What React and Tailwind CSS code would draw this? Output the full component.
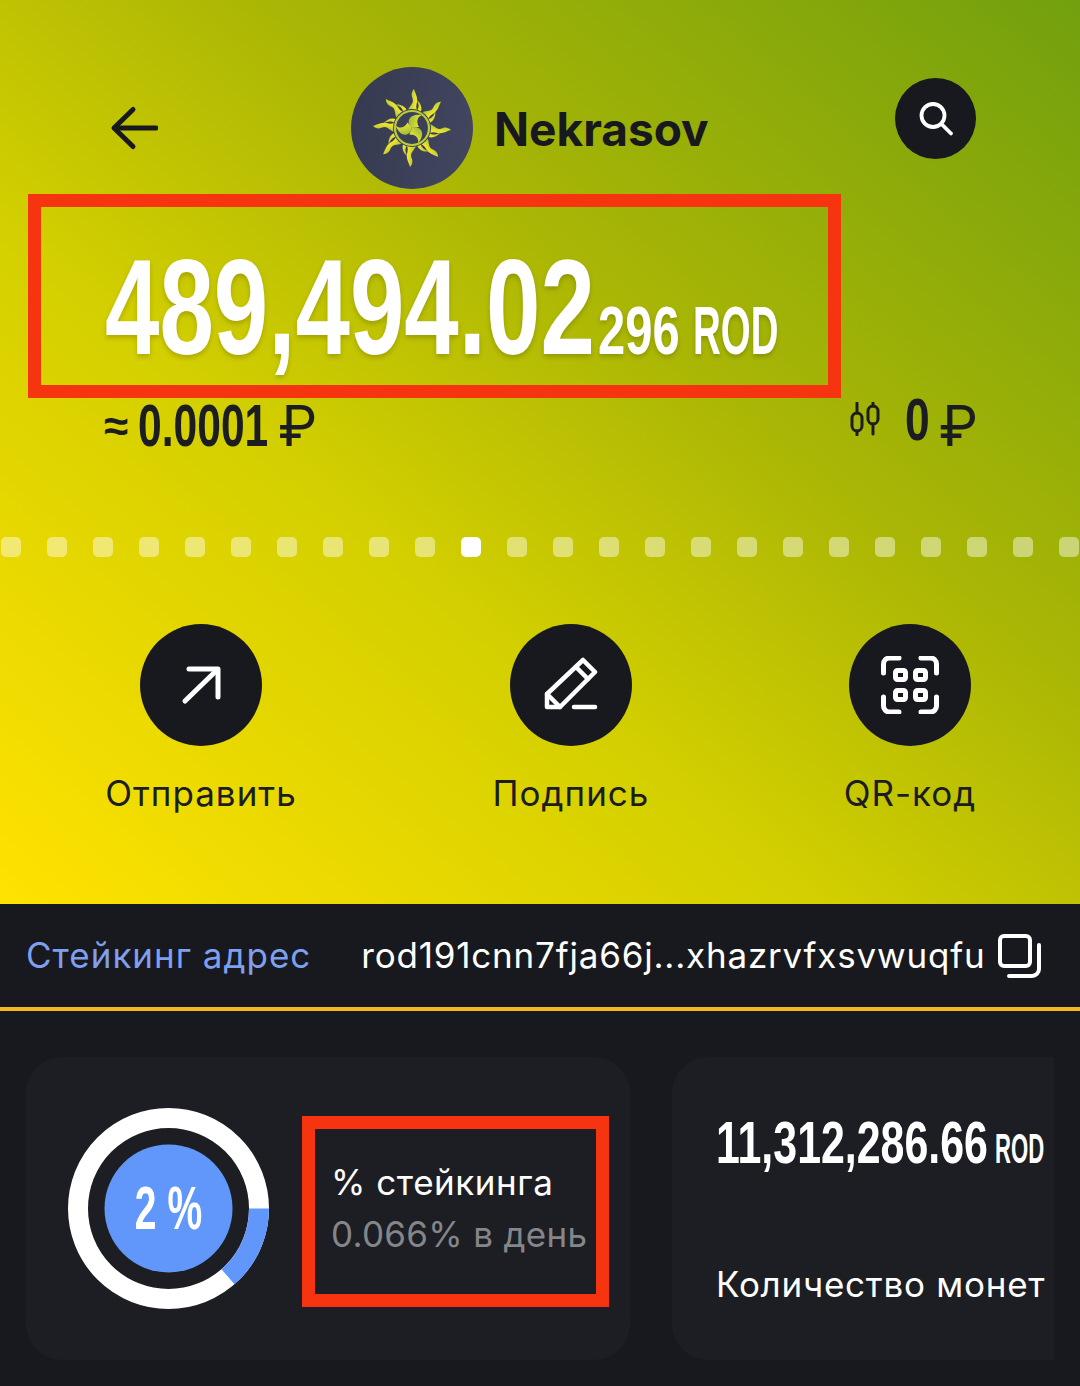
import React from 'react';

const sans = "font-['Inter','Noto_Sans',sans-serif]";
const narrow = "font-['Liberation_Sans',sans-serif]";

function SunLogo() {
  const flames = [];
  for (let i = 0; i < 16; i++) {
    const long = i % 2 === 0;
    flames.push(
      <path
        key={i}
        transform={`rotate(${i * 22.5} 40 40)`}
        d={long
          ? 'M36 22 C38 17 43 15 40 9 C39 6 40 3 42 1 C43 5 46 9 45 14 C44 18 44 20 45 22 Z'
          : 'M38 22 C39 18 37 15 33 12 C38 13 42 17 42 22 Z'}
      />
    );
  }
  return (
    <svg width="80" height="80" viewBox="0 0 80 80">
      <defs>
        <linearGradient id="sun" x1="0" y1="0" x2="1" y2="0.3">
          <stop offset="0" stopColor="#93b53c" />
          <stop offset="0.55" stopColor="#c6d136" />
          <stop offset="1" stopColor="#f5e62a" />
        </linearGradient>
      </defs>
      <g fill="url(#sun)">{flames}</g>
      <circle cx="40" cy="40" r="19" fill="#3b3f58" />
      <circle cx="40" cy="40" r="17" fill="none" stroke="#b9cb38" strokeWidth="2.200" />
      <g fill="url(#sun)">
        <path d="M40 40 C33 33 38 25 50 27 C45 29 44 34 47 39 Z" />
        <path transform="rotate(120 40 40)" d="M40 40 C33 33 38 25 50 27 C45 29 44 34 47 39 Z" />
        <path transform="rotate(240 40 40)" d="M40 40 C33 33 38 25 50 27 C45 29 44 34 47 39 Z" />
      </g>
    </svg>
  );
}

function ActionButton({ label, children, width }) {
  return (
    <div className={`flex flex-col items-center ${width}`}>
      <div className="flex h-[122px] w-[122px] items-center justify-center rounded-full bg-[#17191e]">
        {children}
      </div>
      <span className="mt-[25px] whitespace-nowrap text-[35px] leading-[44px] tracking-[1px] text-[#1b1d21]">{label}</span>
    </div>
  );
}

export default function App() {
  const dots = Array.from({ length: 24 }, (_, i) => i);

  return (
    <div className={`h-[1386px] w-[1080px] overflow-hidden bg-[#17191e] ${sans}`}>
      <section className="h-[904px] bg-[linear-gradient(to_top_right,#ffe200_0%,#d3cf00_38%,#aab605_62%,#72a00e_100%)]">
        {/* header */}
        <div className="flex items-start pl-[110px] pr-[104px] pt-[67px]">
          <svg className="mt-[36px]" width="48" height="48" viewBox="0 0 48 48" fill="none" stroke="#17191e" strokeWidth="5" strokeLinecap="round" strokeLinejoin="round">
            <path d="M46 25H5" />
            <path d="M23 6.500 4 25l19 18.500" />
          </svg>
          <div className="ml-[193px] flex h-[122px] w-[122px] items-center justify-center rounded-full bg-[linear-gradient(100deg,#363a50,#42465f)]">
            <SunLogo />
          </div>
          <span className="ml-[21px] mt-[30px] text-[46px] font-bold leading-[64px] text-[#17191e]">Nekrasov</span>
          <div className="ml-auto mt-[11px] flex h-[81px] w-[81px] items-center justify-center rounded-full bg-[#17191e]">
            <svg width="44" height="44" viewBox="0 0 44 44" fill="none" stroke="#fff" strokeWidth="3.800" strokeLinecap="round">
              <circle cx="19" cy="18.500" r="11.500" />
              <path d="M27.500 27 37 36.500" />
            </svg>
          </div>
        </div>

        {/* balance, boxed in red */}
        <div className="ml-[28px] mt-[5px] h-[204px] w-[813px] overflow-hidden border-[13px] border-[#f63510]">
          <div className={`ml-[64px] mt-[33px] flex items-baseline whitespace-nowrap font-bold text-white [text-shadow:0_3px_6px_rgba(0,0,0,0.18)] ${narrow}`}>
            <span className="block w-[493px] shrink-0 origin-left scale-x-[0.725] text-[135px] leading-[136px]">489,494.02</span>
            <span className="block w-[95px] shrink-0 origin-left scale-x-[0.72] text-[68px] leading-[68px]">296</span>
            <span className="block w-[90px] shrink-0 origin-left scale-x-[0.565] text-[68px] leading-[68px]">ROD</span>
          </div>
        </div>

        <div className="flex items-start justify-between pl-[104px] pr-[102px]">
          <div className="flex items-center text-[#1b1d21]">
            <span className={`w-[34px] text-[44px] font-bold leading-[56px] ${narrow}`}>≈</span>
            <span className={`block w-[140px] origin-left scale-x-[0.71] whitespace-nowrap text-[60px] font-bold leading-[56px] ${narrow}`}>0.0001</span>
            <span className="text-[56px] font-normal leading-[56px]">₽</span>
          </div>
          <div className="flex items-center text-[#1b1d21]">
            <svg className="mt-[-15px]" width="30" height="34" viewBox="0 0 30 34" fill="none" stroke="#1b1d21" strokeWidth="3" strokeLinecap="round">
              <path d="M7 1v10M7 29v4M23 1v3M23 22v10" />
              <rect x="2" y="11" width="10" height="18" rx="5" />
              <rect x="18" y="4" width="10" height="18" rx="5" />
            </svg>
            <span className={`ml-[25px] mt-[-13px] block w-[34px] origin-left scale-x-[0.74] text-[60px] font-bold leading-[56px] ${narrow}`}>0</span>
            <span className="text-[56px] font-normal leading-[56px]">₽</span>
          </div>
        </div>

        {/* pager */}
        <div className="mt-[83px] flex justify-between px-[1px]">
          {dots.map(i => (
            <span key={i} className={`h-[20px] w-[20px] rounded-[5px] ${i === 10 ? 'bg-white' : 'bg-white/45'}`} />
          ))}
        </div>

        {/* actions */}
        <div className="mt-[67px] flex items-start">
          <div className="ml-[105px]">
            <ActionButton label="Отправить" width="w-[192px]">
              <svg width="44" height="44" viewBox="0 0 44 44" fill="none" stroke="#fff" strokeWidth="5" strokeLinecap="round" strokeLinejoin="round">
                <path d="M10 6h29v28" />
                <path d="M38 7 6 38" />
              </svg>
            </ActionButton>
          </div>
          <div className="ml-[197px]">
            <ActionButton label="Подпись" width="w-[154px]">
              <svg width="56" height="56" viewBox="0 0 56 56" fill="none" stroke="#fff" strokeWidth="4.500" strokeLinecap="round" strokeLinejoin="round">
                <path d="M40 3 52 15 17 50H4V37Z" />
                <path d="M33 10 45 22" />
                <path d="M4 37 17 50" />
                <path d="M31 50h21" />
              </svg>
            </ActionButton>
          </div>
          <div className="ml-[196px]">
            <ActionButton label="QR-код" width="w-[132px]">
              <svg width="58" height="58" viewBox="0 0 58 58" fill="none" stroke="#fff" strokeWidth="5" strokeLinecap="round">
                <path d="M2.500 17V8a6 6 0 0 1 6-6H18M40 2h9.500a6 6 0 0 1 6 6v9M2.500 41v9a6 6 0 0 0 6 6H18M40 56h9.500a6 6 0 0 0 6-6v-9" />
                <rect x="14.500" y="14.500" width="10" height="9" rx="2" />
                <rect x="34.500" y="14.500" width="10" height="9" rx="2" />
                <rect x="14.500" y="34.500" width="10" height="9" rx="2" />
                <rect x="34.500" y="34.500" width="10" height="9" rx="2" />
              </svg>
            </ActionButton>
          </div>
        </div>
      </section>

      {/* staking address */}
      <div className="flex h-[103px] items-center pl-[26px] pr-[38px] text-[35px]">
        <span className="tracking-[1px] text-[#7f9ff0]">Стейкинг адрес</span>
        <span className="ml-[50px] tracking-[0.8px] text-white">rod191cnn7fja66j...xhazrvfxsvwuqfu</span>
        <svg className="ml-auto" width="44" height="44" viewBox="0 0 44 44" fill="none" stroke="#fff" strokeWidth="4" strokeLinecap="round" strokeLinejoin="round">
          <rect x="2" y="2" width="30" height="30" rx="4" />
          <path d="M41 11v24a7 7 0 0 1-7 7H11" />
        </svg>
      </div>
      <div className="h-[4px] bg-[#f5b81e]" />

      {/* cards */}
      <div className="ml-[26px] mt-[46px] flex w-[1028px] gap-[42px] overflow-hidden">
        <div className="flex h-[303px] w-[604px] shrink-0 items-center rounded-[36px] bg-[#1c1e24] pl-[42px]">
          <div className="relative h-[201px] w-[201px] shrink-0">
            <svg width="201" height="201" viewBox="0 0 201 201">
              <circle cx="100.500" cy="100.500" r="90.500" fill="none" stroke="#fff" strokeWidth="20" />
              <path d="M191 100.500A90.500 90.500 0 0 1 160 168.800" fill="none" stroke="#6197fb" strokeWidth="20" />
              <circle cx="100.500" cy="100.500" r="64" fill="#6197fb" />
            </svg>
            <span className={`absolute inset-0 flex scale-x-[0.64] items-center justify-center whitespace-nowrap text-[61px] font-bold text-white ${narrow}`}>2 %</span>
          </div>
          <div className="ml-[33px] mt-[6px] flex h-[191px] w-[307px] shrink-0 flex-col justify-center border-[13px] border-[#f63510] pb-[7px] pl-[16px]">
            <span className="text-[35px] leading-[52px] tracking-[0.55px] text-white">% стейкинга</span>
            <span className="whitespace-nowrap text-[35px] leading-[52px] tracking-[0.3px] text-[#84868a]">0.066% в день</span>
          </div>
        </div>
        <div className="flex h-[303px] w-[382px] shrink-0 flex-col rounded-l-[36px] bg-[#1c1e24] pl-[44px]">
          <div className={`mt-[56px] flex items-baseline whitespace-nowrap font-bold text-white ${narrow}`}>
            <span className="block w-[279px] shrink-0 origin-left scale-x-[0.715] text-[60px] leading-[60px]">11,312,286.66</span>
            <span className="block w-[50px] shrink-0 origin-left scale-x-[0.515] text-[43px] leading-[60px]">ROD</span>
          </div>
          <span className="mt-[81px] whitespace-nowrap text-[35px] leading-[50px] tracking-[0.75px] text-white">Количество монет</span>
        </div>
      </div>
    </div>
  );
}
